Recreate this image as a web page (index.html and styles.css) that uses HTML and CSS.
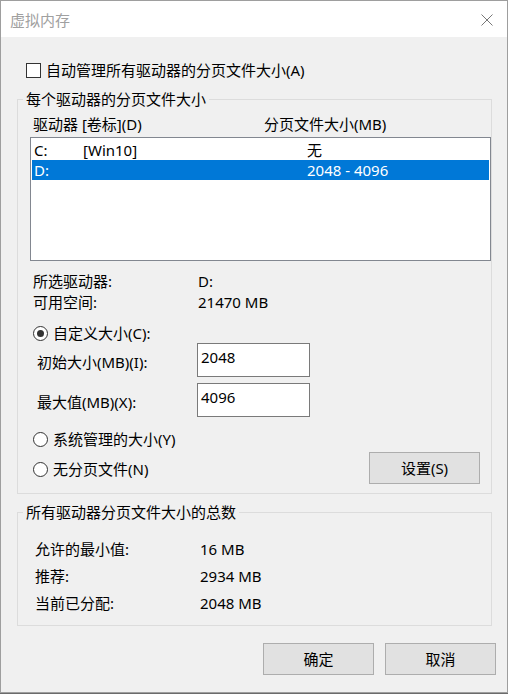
FILE: index.html
```html
<!DOCTYPE html>
<html lang="zh-CN">
<head>
<meta charset="utf-8">
<title>虚拟内存</title>
<link rel="stylesheet" href="styles.css">
</head>
<body>
<div class="window">
  <div class="titlebar">
    <span class="title">虚拟内存</span>
    <span class="close">
      <svg width="12" height="12" viewBox="0 0 12 12"><path d="M0.5 0.5 L11.5 11.5 M11.5 0.5 L0.5 11.5" stroke="#777" stroke-width="1" fill="none"/></svg>
    </span>
  </div>
  <div class="content">
    <div class="auto-row">
      <span class="checkbox"></span>
      <span>自动管理所有驱动器的分页文件大小(A)</span>
    </div>

    <fieldset class="group group-drives">
      <legend>每个驱动器的分页文件大小</legend>
      <div class="list-header">
        <span class="col-drive">驱动器 [卷标](D)</span>
        <span>分页文件大小(MB)</span>
      </div>
      <div class="listbox">
        <div class="list-row">
          <span class="c1">C:</span><span class="c2">[Win10]</span><span>无</span>
        </div>
        <div class="list-row selected">
          <span class="c1">D:</span><span class="c2"></span><span>2048 - 4096</span>
        </div>
      </div>
      <div class="info">
        <div class="info-row"><span class="info-label">所选驱动器:</span><span>D:</span></div>
        <div class="info-row"><span class="info-label">可用空间:</span><span>21470 MB</span></div>
      </div>
      <div class="radio-row first">
        <span class="radio checked"></span><span>自定义大小(C):</span>
      </div>
      <div class="field-row">
        <span class="field-label">初始大小(MB)(I):</span>
        <span class="textbox">2048</span>
      </div>
      <div class="field-row second">
        <span class="field-label">最大值(MB)(X):</span>
        <span class="textbox">4096</span>
      </div>
      <div class="radio-row sys">
        <span class="radio"></span><span>系统管理的大小(Y)</span>
      </div>
      <div class="none-row">
        <div class="radio-line">
          <span class="radio"></span><span>无分页文件(N)</span>
        </div>
        <button class="btn btn-set">设置(S)</button>
      </div>
    </fieldset>

    <fieldset class="group group-total">
      <legend>所有驱动器分页文件大小的总数</legend>
      <div class="totals">
        <div class="total-row"><span class="total-label">允许的最小值:</span><span>16 MB</span></div>
        <div class="total-row"><span class="total-label">推荐:</span><span>2934 MB</span></div>
        <div class="total-row"><span class="total-label">当前已分配:</span><span>2048 MB</span></div>
      </div>
    </fieldset>

    <div class="buttons">
      <button class="btn">确定</button>
      <button class="btn">取消</button>
    </div>
  </div>
</div>
</body>
</html>
```

FILE: styles.css
```css
html {
  background: #6b6b6b;
}
body {
  margin: 0;
  font-family: "Noto Sans", "Noto Sans CJK SC", sans-serif;
  font-size: 15px;
  line-height: 20px;
  color: #000;
}
.window {
  width: 508px;
  height: 693px;
  box-sizing: border-box;
  border: 1px solid #9e9e9e;
  background: #f0f0f0;
  overflow: hidden;
}
.titlebar {
  height: 36px;
  background: #fff;
  display: flex;
  align-items: center;
  justify-content: space-between;
  padding: 0 14px 0 9px;
}
.title {
  color: #a0a0a0;
  line-height: 36px;
  padding-top: 2px;
}
.close {
  display: flex;
  width: 12px;
  height: 12px;
  margin-top: 2px;
}
.content {
  padding: 0 11px 0 16px;
}
.auto-row {
  margin-top: 23px;
  height: 20px;
  display: flex;
  align-items: center;
}
.checkbox {
  width: 15px;
  height: 15px;
  box-sizing: border-box;
  border: 1px solid #333;
  background: #fff;
  margin-left: 9px;
  margin-right: 5px;
}
.group {
  margin: 0;
  padding: 0;
  border: 1px solid #dcdcdc;
  width: 475px;
  box-sizing: border-box;
  min-inline-size: 0;
}
.group legend {
  margin-left: 5px;
  padding: 0 3px;
  line-height: 20px;
}
.group-drives {
  margin-top: 9px;
  padding-bottom: 9px;
}
.list-header {
  margin-top: 5px;
  height: 20px;
  display: flex;
  padding-left: 15px;
}
.col-drive {
  width: 231px;
}
.listbox {
  margin: 3px 0 0 12px;
  width: 461px;
  height: 124px;
  box-sizing: border-box;
  border: 1px solid #828790;
  background: #fff;
  padding: 2px 1px 0;
}
.list-row {
  height: 20px;
  display: flex;
  padding-left: 2px;
}
.list-row.selected {
  background: #0078d7;
  color: #fff;
}
.c1 {
  width: 49px;
}
.c2 {
  width: 224px;
}
.info {
  margin-top: 9px;
  padding-left: 15px;
}
.info-row {
  height: 21px;
  display: flex;
  align-items: center;
}
.info-label {
  width: 165px;
}
.radio-row {
  height: 20px;
  display: flex;
  align-items: center;
  padding-left: 15px;
}
.radio-row.first {
  margin-top: 11px;
}
.radio-row.sys {
  margin-top: 12px;
}
.radio {
  width: 15px;
  height: 15px;
  box-sizing: border-box;
  border: 1px solid #333;
  border-radius: 50%;
  background: #fff;
  margin-right: 5px;
  display: flex;
  align-items: center;
  justify-content: center;
}
.radio.checked::after {
  content: "";
  width: 7px;
  height: 7px;
  border-radius: 50%;
  background: #333;
}
.field-row {
  height: 34px;
  display: flex;
  align-items: center;
  padding-left: 19px;
}
.field-row.second {
  margin-top: 6px;
}
.field-label {
  width: 160px;
  padding-top: 3px;
}
.textbox {
  width: 113px;
  height: 34px;
  box-sizing: border-box;
  border: 1px solid #7a7a7a;
  background: #fff;
  padding: 3px 0 0 3px;
}
.none-row {
  margin-top: 3px;
  height: 32px;
  display: flex;
  align-items: center;
  justify-content: space-between;
  padding: 0 11px 0 15px;
}
.radio-line {
  display: flex;
  align-items: center;
  padding-top: 2px;
}
.btn {
  width: 111px;
  height: 32px;
  box-sizing: border-box;
  border: 1px solid #adadad;
  background: #e1e1e1;
  font: inherit;
  color: #000;
  padding: 0;
}
.group-total {
  margin-top: 8px;
  padding-bottom: 9px;
}
.totals {
  margin-top: 13px;
  padding-left: 17px;
}
.total-row {
  height: 27px;
  display: flex;
  align-items: center;
}
.total-label {
  width: 165px;
}
.buttons {
  margin-top: 17px;
  display: flex;
  justify-content: flex-end;
  gap: 11px;
}
```
